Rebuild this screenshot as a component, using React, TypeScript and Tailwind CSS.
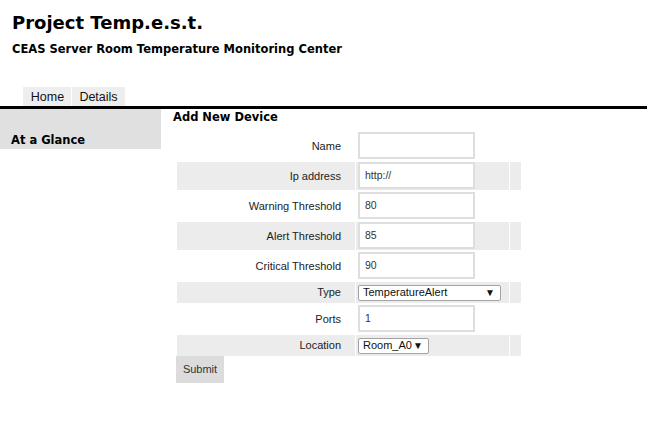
import React from "react";

const rows: { label: string; kind: "input" | "select"; value: string; gray: boolean; w?: string }[] = [
  { label: "Name", kind: "input", value: "", gray: false },
  { label: "Ip address", kind: "input", value: "http://", gray: true },
  { label: "Warning Threshold", kind: "input", value: "80", gray: false },
  { label: "Alert Threshold", kind: "input", value: "85", gray: true },
  { label: "Critical Threshold", kind: "input", value: "90", gray: false },
  { label: "Type", kind: "select", value: "TemperatureAlert", gray: true, w: "w-[143px]" },
  { label: "Ports", kind: "input", value: "1", gray: false },
  { label: "Location", kind: "select", value: "Room_A0", gray: true, w: "w-[71px]" },
];

export default function App() {
  return (
    <div className="w-[647px] h-[440px] bg-white text-black overflow-hidden">
      <div className="pl-[12px] pt-[12px] h-[87px]">
        <div className="font-['DejaVu_Sans',sans-serif] font-bold text-[18px] leading-[22px]">Project Temp.e.s.t.</div>
        <div className="font-['DejaVu_Sans',sans-serif] font-bold text-[11.5px] leading-[14px] mt-[8px]">
          CEAS Server Room Temperature Monitoring Center
        </div>
      </div>
      <div className="flex pl-[23px] gap-[1px] h-[19px] font-['Liberation_Sans',sans-serif] text-[12.5px] text-[#111]">
        <div className="bg-[#eeeeee] w-[48px] flex items-center justify-center pt-[1px] pl-[1px]">Home</div>
        <div className="bg-[#eeeeee] w-[53px] flex items-center justify-center pt-[1px]">Details</div>
      </div>
      <div className="h-[3px] bg-black" />
      <div className="flex">
        <div className="w-[161px] h-[40px] bg-[#e0e0e0] flex items-end pl-[11px] pb-[0px] font-['DejaVu_Sans',sans-serif] font-bold text-[11.5px]">
          At a Glance
        </div>
        <div className="flex flex-col">
          <div className="pl-[12px] pt-[1px] h-[23px] font-['DejaVu_Sans',sans-serif] font-bold text-[11.5px] leading-[14px]">
            Add New Device
          </div>
          <div className="pl-[16px] grid grid-cols-[178px_153px_11px] gap-x-[1px] gap-y-[2px] font-['Liberation_Sans',sans-serif] text-[11px] text-[#222]">
            {rows.map((r) => {
              const bg = r.gray ? "bg-[#ececec]" : "bg-white";
              const h = r.kind === "select" ? "h-[21px]" : "h-[28px]";
              return (
                <React.Fragment key={r.label}>
                  <div className={`${bg} ${h} flex items-center justify-end pr-[14px]`}>{r.label}</div>
                  <div className={`${bg} ${h} pl-[2px] ${r.kind === "select" ? "flex items-center" : ""}`}>
                    {r.kind === "input" ? (
                      <div className="w-[117px] h-[27px] bg-white border-2 border-[#dedede] flex items-center pl-[5px] text-[10.5px] text-[#333]">
                        {r.value}
                      </div>
                    ) : (
                      <div className={`${r.w} h-[16px] bg-white border border-[#a3a3a3] rounded-[2px] flex items-center justify-between pl-[4px] pr-[5px] text-[11px] text-[#111]`}>
                        <span>{r.value}</span>
                        <span className="text-[10px] leading-none">▼</span>
                      </div>
                    )}
                  </div>
                  <div className={`${bg} ${h}`} />
                </React.Fragment>
              );
            })}
          </div>
          <div className="pl-[15px] pt-[0px]">
            <div className="w-[48px] h-[27px] bg-[#dcdcdc] flex items-center justify-center font-['Liberation_Sans',sans-serif] text-[11px] text-[#333]">
              Submit
            </div>
          </div>
        </div>
      </div>
    </div>
  );
}
